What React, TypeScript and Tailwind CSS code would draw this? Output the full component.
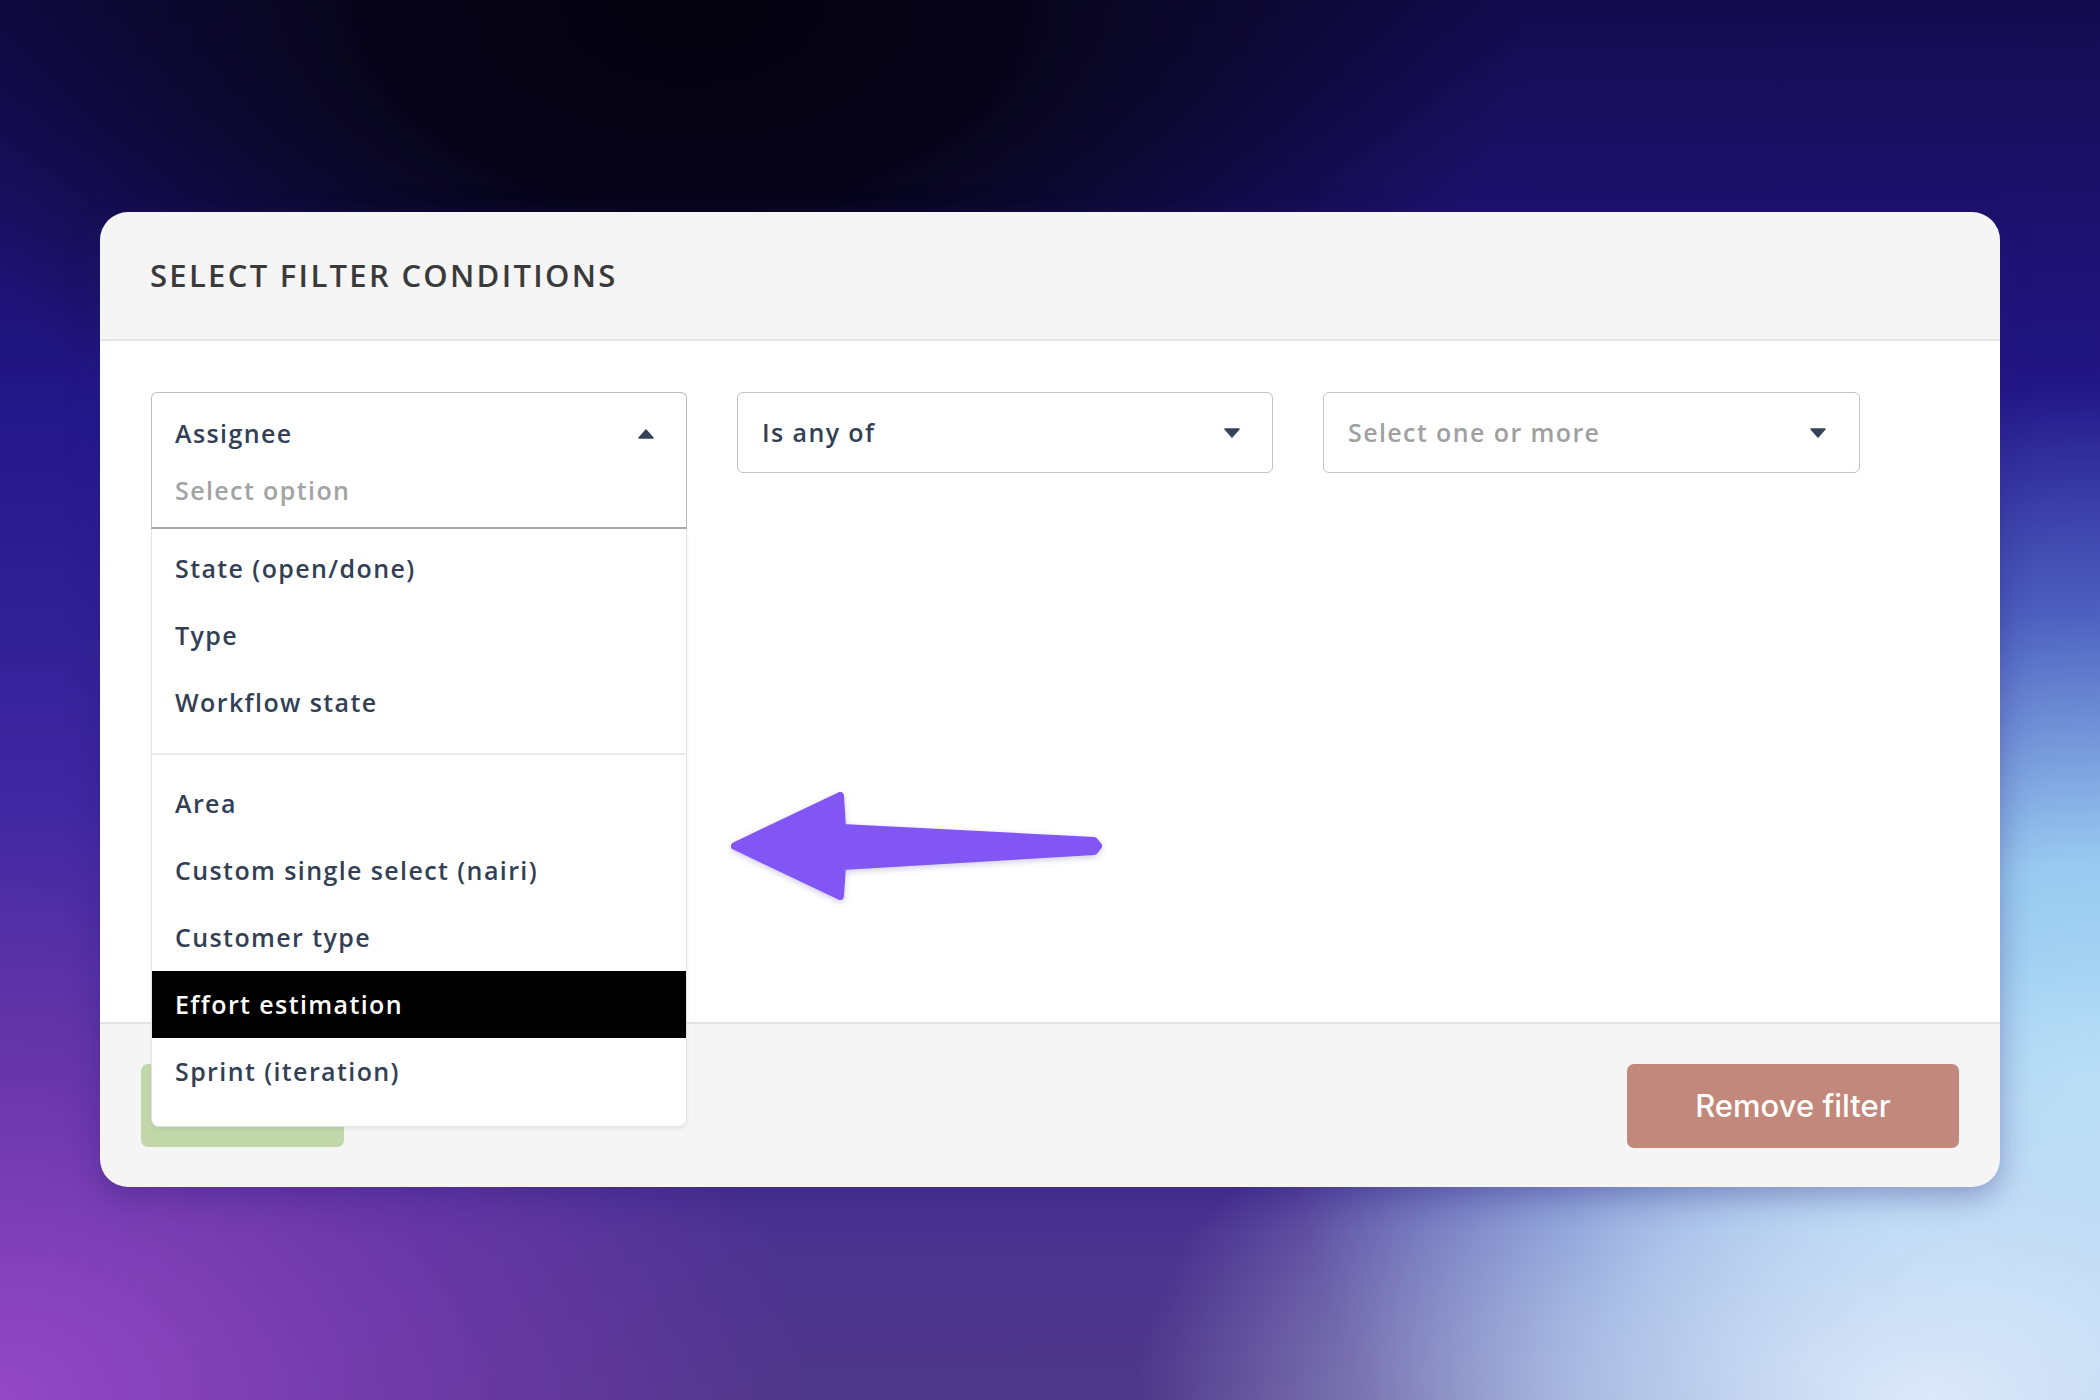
import React from "react";

const font = { fontFamily: '"Open Sans", "Noto Sans", sans-serif' };

function Caret({ up = false }: { up?: boolean }) {
  return (
    <svg width="16" height="10" viewBox="0 0 16 10" className="shrink-0">
      {up ? (
        <polygon points="8,1 15,9 1,9" fill="#34435a" stroke="#34435a" strokeWidth="1.5" strokeLinejoin="round" />
      ) : (
        <polygon points="1,1 15,1 8,9" fill="#34435a" stroke="#34435a" strokeWidth="1.5" strokeLinejoin="round" />
      )}
    </svg>
  );
}

function Row({ label, active = false }: { label: string; active?: boolean }) {
  return (
    <div
      className={
        "h-[67px] flex items-center px-[23px] text-[25px] font-semibold tracking-[1.4px] " +
        (active ? "bg-black text-white" : "text-[#323f55]")
      }
    >
      {label}
    </div>
  );
}

export default function App() {
  return (
    <div
      className="w-full h-[1400px] overflow-hidden pt-[212px] pl-[100px] bg-[radial-gradient(ellipse_38%_32%_at_92%_100%,#dde9f9_0%,rgba(205,225,247,0.7)_45%,rgba(190,215,245,0)_100%),radial-gradient(ellipse_42%_55%_at_100%_78%,#b2def6_0%,#98c9ef_30%,rgba(100,150,225,0.55)_62%,rgba(90,110,210,0)_92%),radial-gradient(ellipse_45%_50%_at_0%_100%,#9448c6_0%,rgba(130,60,185,0.6)_45%,rgba(110,50,170,0)_85%),radial-gradient(ellipse_40%_38%_at_33%_0%,#04020d_0%,#07041a_40%,rgba(8,5,30,0)_100%),linear-gradient(to_bottom,#140b4e_0%,#24178a_30%,#3f28a2_58%,#4d3788_100%)]"
      style={font}
    >
      <div className="w-[1900px] h-[975px] rounded-[28px] bg-[#f5f5f5] flex flex-col overflow-hidden shadow-[0_10px_30px_rgba(40,30,120,0.35)]">
        {/* header */}
        <div className="h-[129px] shrink-0 flex items-center px-[50px] border-b-2 border-[#e3e3e3]">
          <h1 className="text-[31px] font-semibold text-[#3a3a3a] tracking-[2.3px] uppercase">
            Select filter conditions
          </h1>
        </div>

        {/* body */}
        <div className="relative h-[681px] shrink-0 bg-white pt-[51px] pl-[51px] flex gap-[50px] items-start">
          {/* dropdown 1 */}
          <div className="relative w-[536px] z-10">
            <div className="h-[137px] border border-[#bdbdbd] border-b-2 border-b-[#a8a8a8] rounded-t-[6px] px-[23px] pt-[22px] flex flex-col">
              <div className="flex items-center justify-between h-[38px]">
                <span className="text-[25px] font-semibold text-[#323f55] tracking-[1.4px]">Assignee</span>
                <span className="mr-[9px]">
                  <Caret up />
                </span>
              </div>
              <div className="h-[38px] mt-[19px] flex items-center text-[25px] font-semibold text-[#a3a3a3] tracking-[1.4px]">
                Select option
              </div>
            </div>
            <div className="absolute left-0 top-full w-full h-[598px] bg-white border border-t-0 border-[#e4e4e4] rounded-b-[8px] overflow-hidden shadow-[0_2px_4px_rgba(0,0,0,0.06)]">
              <div className="pt-[6px] pb-[17px] border-b-2 border-[#ebebeb]">
                <Row label="State (open/done)" />
                <Row label="Type" />
                <Row label="Workflow state" />
              </div>
              <div className="pt-[15px]">
                <Row label="Area" />
                <Row label="Custom single select (nairi)" />
                <Row label="Customer type" />
                <Row label="Effort estimation" active />
                <Row label="Sprint (iteration)" />
              </div>
            </div>
          </div>

          {/* dropdown 2 */}
          <div className="w-[536px] h-[81px] border border-[#c4c4c4] rounded-[6px] flex items-center justify-between pl-[24px] pr-[32px]">
            <span className="text-[25px] font-semibold text-[#323f55] tracking-[1.4px]">Is any of</span>
            <Caret />
          </div>

          {/* dropdown 3 */}
          <div className="w-[537px] h-[81px] border border-[#c4c4c4] rounded-[6px] flex items-center justify-between pl-[24px] pr-[33px]">
            <span className="text-[25px] font-semibold text-[#a0a0a0] tracking-[1.4px]">Select one or more</span>
            <Caret />
          </div>

          {/* annotation arrow */}
          <svg
            className="absolute left-[620px] top-[439px] drop-shadow-[0_2px_3px_rgba(60,40,140,0.25)]"
            width="400"
            height="130"
            viewBox="0 0 400 130"
          >
            <polygon
              points="15,66 120,16 122,48 374,61 378,66 374,71 122,86 120,116"
              fill="#8156f4"
              stroke="#8156f4"
              strokeWidth="8"
              strokeLinejoin="round"
            />
          </svg>
        </div>

        {/* footer */}
        <div className="flex-1 border-t-2 border-[#e3e3e3] flex justify-between items-start pt-[40px] px-[41px]">
          <button className="w-[203px] h-[83px] rounded-[7px] bg-[#c1d6a9] text-white text-[28px] font-medium">
            Apply
          </button>
          <button
            className="w-[332px] h-[84px] rounded-[7px] bg-[#c2887b] text-white text-[31px] font-medium"
            style={{ fontFamily: 'Inter, "Noto Sans", sans-serif' }}
          >
            Remove filter
          </button>
        </div>
      </div>
    </div>
  );
}
